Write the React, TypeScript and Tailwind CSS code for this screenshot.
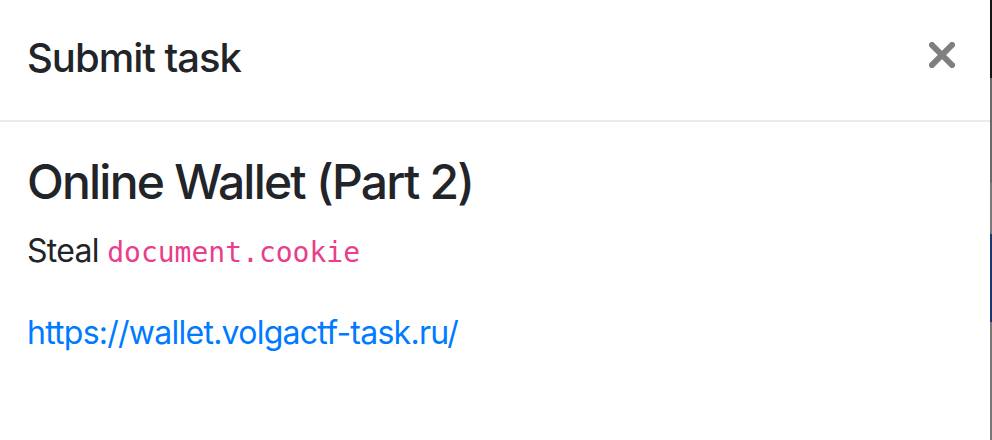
export default function App() {
  return (
    <div className="flex h-[440px] w-[992px] overflow-hidden bg-white font-['Inter',sans-serif] text-[#212529]">
      <div className="flex w-[990px] flex-col">
        <header className="flex h-[122px] items-center justify-between border-b-2 border-[#e9ecef] pl-[27px] pr-[35px] pb-[4px]">
          <h5 className="text-[40px] font-medium leading-[60px] tracking-[-1px]">Submit task</h5>
          <button type="button" aria-label="Close" className="mt-[-6px]">
            <svg width="26" height="26" viewBox="0 0 26 26">
              <path d="M3 3 L23 23 M23 3 L3 23" stroke="#7f7f7f" strokeWidth="6" strokeLinecap="square" />
            </svg>
          </button>
        </header>
        <div className="px-[27px] pt-[31px]">
          <h4 className="mb-[16px] text-[48px] font-medium leading-[58px] tracking-[-1.8px]">Online Wallet (Part 2)</h4>
          <p className="mb-[32px] text-[32px] leading-[48px]">
            <span className="tracking-[-0.7px]">Steal </span>
            <code className="font-['DejaVu_Sans_Mono',monospace] text-[28px] text-[#e83e8c]">document.cookie</code>
          </p>
          <p className="text-[32px] leading-[48px] tracking-[-0.75px]">
            <a href="#" className="text-[#007bff]">https://wallet.volgactf-task.ru/</a>
          </p>
        </div>
      </div>
      <div className="flex w-[2px] flex-col">
        <div className="h-[78px] bg-[#151515]" />
        <div className="h-[105px] bg-[#6a6a6a]" />
        <div className="h-[51px] bg-[#7a7a7a]" />
        <div className="h-[88px] bg-[#1d3570]" />
        <div className="flex-1 bg-[#777777]" />
      </div>
    </div>
  );
}
